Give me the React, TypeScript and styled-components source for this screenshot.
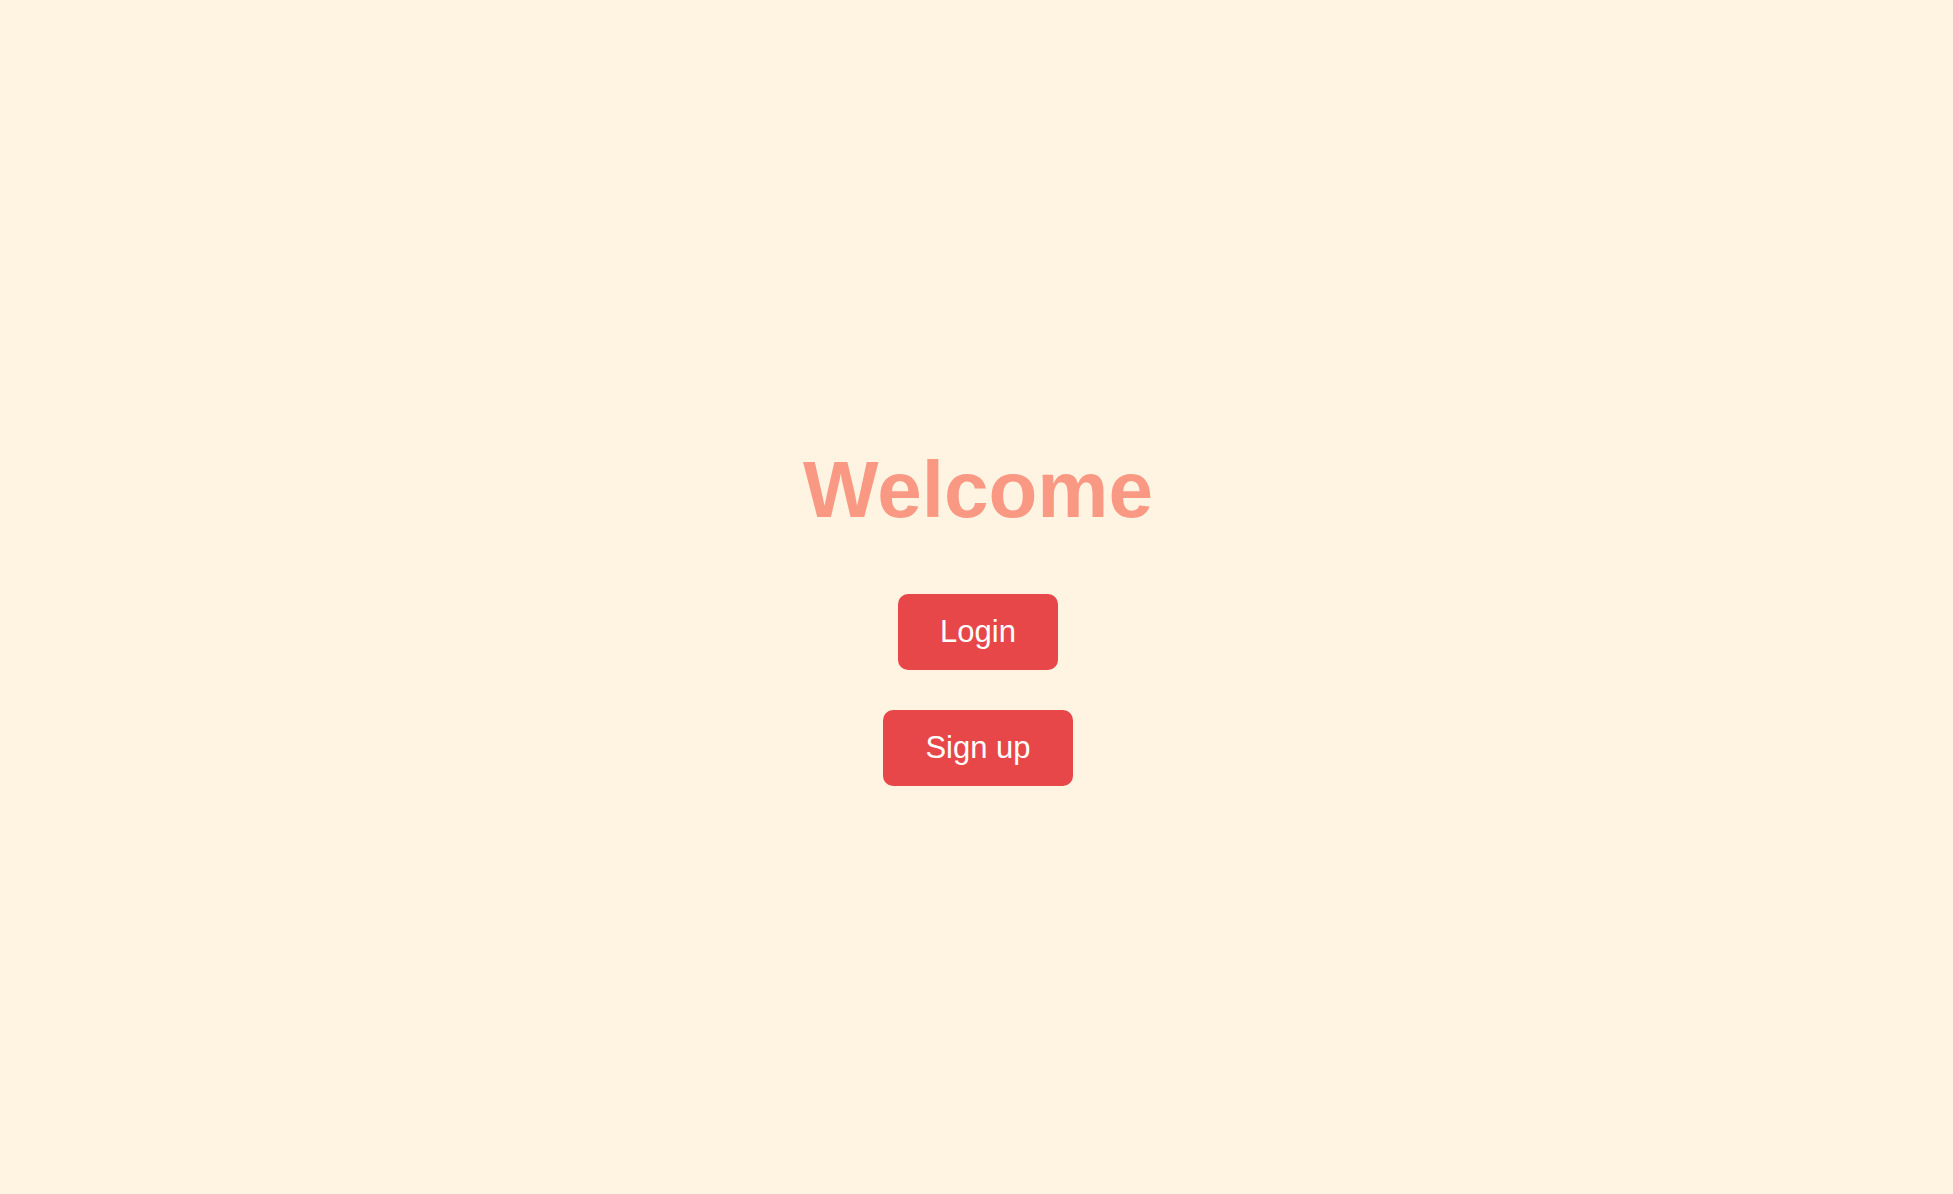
import styled, { createGlobalStyle } from "styled-components";

const GlobalStyle = createGlobalStyle`
    html, body {
        margin: 0;
        padding: 0;
        background-color: #fff4e2;
        font-family: "Liberation Sans", Arial, sans-serif;
    }
`;

function App() {
    return (
        <>
            <GlobalStyle />
            <Page>
                <Title>Welcome</Title>
                <Actions>
                    <Button>Login</Button>
                    <Button>Sign up</Button>
                </Actions>
            </Page>
        </>
    );
}

const Page = styled.main`
    min-height: 100vh;
    box-sizing: border-box;
    padding: 36px 0 0 3px;
    display: flex;
    flex-direction: column;
    justify-content: center;
    align-items: center;
    background-color: #fff4e2;
`;

const Title = styled.h1`
    margin: 0 0 58px;
    font-size: 80px;
    font-weight: 700;
    line-height: 92px;
    color: #fa9983;
`;

const Actions = styled.div`
    display: flex;
    flex-direction: column;
    align-items: center;
    gap: 40px;
`;

const Button = styled.button`
    height: 76px;
    padding: 0 42px;
    border: none;
    border-radius: 10px;
    background-color: #e74748;
    color: #ffffff;
    font-family: "Liberation Sans", Arial, sans-serif;
    font-size: 31px;
    cursor: pointer;
`;

export default App;
